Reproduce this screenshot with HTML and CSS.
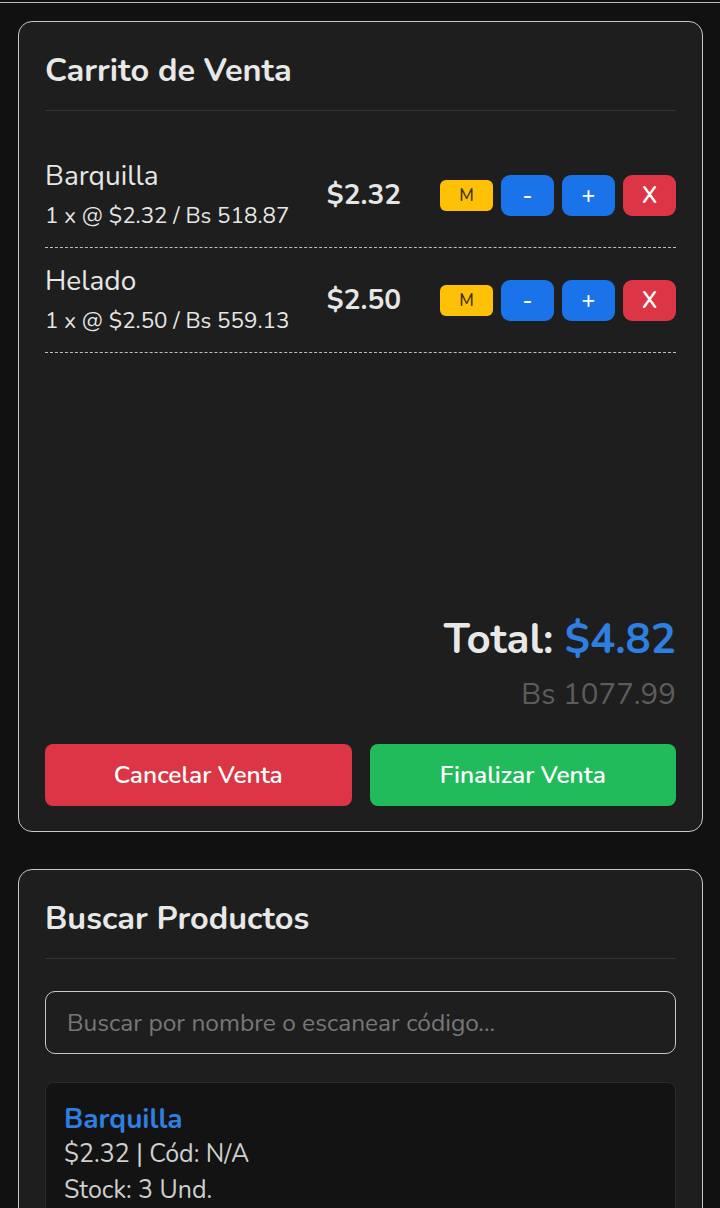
FILE: index.html
```html
<!DOCTYPE html>
<html lang="es">
<head>
    <meta charset="UTF-8">
    <meta name="viewport" content="width=device-width, initial-scale=1.0">
    <title>Punto de Venta</title>
    <link rel="stylesheet" href="styles.css">
</head>
<body>

    <div class="barra-top"></div>

    <div class="contenedor">
        <section class="tarjeta">
            <h2>Carrito de Venta</h2>

            <div class="lista-carrito">
                <div class="item-carrito">
                    <div class="item-info">
                        <div class="item-nombre">Barquilla</div>
                        <div class="item-detalle">1 x @ $2.32 / Bs 518.87</div>
                    </div>
                    <div class="item-precio">$2.32</div>
                    <div class="item-acciones">
                        <button class="btn-mini btn-m">M</button>
                        <button class="btn-mini btn-azul">-</button>
                        <button class="btn-mini btn-azul">+</button>
                        <button class="btn-mini btn-rojo">X</button>
                    </div>
                </div>
                <div class="item-carrito">
                    <div class="item-info">
                        <div class="item-nombre">Helado</div>
                        <div class="item-detalle">1 x @ $2.50 / Bs 559.13</div>
                    </div>
                    <div class="item-precio">$2.50</div>
                    <div class="item-acciones">
                        <button class="btn-mini btn-m">M</button>
                        <button class="btn-mini btn-azul">-</button>
                        <button class="btn-mini btn-azul">+</button>
                        <button class="btn-mini btn-rojo">X</button>
                    </div>
                </div>
            </div>

            <div class="total">Total: <span class="total-usd">$4.82</span></div>
            <div class="total-bs">Bs 1077.99</div>

            <div class="acciones-venta">
                <button class="btn-grande btn-cancelar">Cancelar Venta</button>
                <button class="btn-grande btn-finalizar">Finalizar Venta</button>
            </div>
        </section>

        <section class="tarjeta">
            <h2>Buscar Productos</h2>
            <input type="text" class="buscador" placeholder="Buscar por nombre o escanear código...">

            <div class="producto">
                <div class="producto-nombre">Barquilla</div>
                <div class="producto-linea">$2.32 | Cód: N/A</div>
                <div class="producto-linea">Stock: 3 Und.</div>
            </div>
        </section>
    </div>

</body>
</html>
```

FILE: styles.css
```css
* {
    margin: 0;
    padding: 0;
    box-sizing: border-box;
}

body {
    font-family: 'Nunito', 'Lato', sans-serif;
    background: #111111;
    color: #e6e6e6;
}

.barra-top {
    height: 3px;
    border-bottom: 1px solid #bdbdbd;
}

.contenedor {
    padding: 18px 17px 0 18px;
    display: flex;
    flex-direction: column;
    gap: 37px;
}

.tarjeta {
    background: #1e1e1e;
    border: 1px solid #c8c8c8;
    border-radius: 14px;
    padding: 28px 26px 25px;
}

h2 {
    font-size: 32.5px;
    line-height: 40px;
    font-weight: 700;
    color: #e8e8e8;
    padding-bottom: 20px;
    border-bottom: 1px solid #333333;
}

.lista-carrito {
    margin-top: 32px;
    min-height: 450px;
}

.item-carrito {
    display: flex;
    align-items: center;
    padding: 16px 0;
    border-bottom: 1px dashed #bdbdbd;
}

.item-info {
    flex: 1;
}

.item-nombre {
    font-size: 28px;
    line-height: 34px;
}

.item-detalle {
    font-size: 22.4px;
    line-height: 30px;
    margin-top: 8px;
}

.item-precio {
    font-size: 28px;
    font-weight: 700;
    margin-right: 39px;
}

.item-acciones {
    display: flex;
    align-items: center;
    gap: 8px;
}

.btn-mini {
    width: 53px;
    height: 41px;
    border: none;
    border-radius: 9px;
    color: white;
    font-family: inherit;
    font-size: 23px;
    font-weight: 600;
    cursor: pointer;
}

.btn-m {
    height: 31px;
    border-radius: 6px;
    background: #ffc107;
    color: #3a2e00;
    font-size: 17px;
    font-weight: 500;
}

.btn-azul {
    background: #1a73e8;
}

.btn-rojo {
    background: #dc3545;
}

.total {
    margin-top: 22px;
    text-align: right;
    font-size: 42px;
    line-height: 50px;
    font-weight: 700;
    color: #e8e8e8;
}

.total-usd {
    color: #2f7fe0;
}

.total-bs {
    margin-top: 11px;
    text-align: right;
    font-size: 29.5px;
    line-height: 36px;
    color: #5c5c5c;
}

.acciones-venta {
    margin-top: 32px;
    display: flex;
    gap: 18px;
}

.btn-grande {
    flex: 1;
    height: 62px;
    border: none;
    border-radius: 8px;
    color: white;
    font-family: inherit;
    font-size: 24.5px;
    font-weight: 600;
    cursor: pointer;
}

.btn-cancelar {
    background: #dc3545;
}

.btn-finalizar {
    background: #22bb5b;
}

.buscador {
    display: block;
    width: 100%;
    height: 63px;
    margin-top: 32px;
    padding: 0 21px;
    background: #1e1e1e;
    border: 1px solid #c8c8c8;
    border-radius: 10px;
    color: #e6e6e6;
    font-family: inherit;
    font-size: 24.5px;
    outline: none;
}

.buscador::placeholder {
    color: #777777;
}

.producto {
    margin-top: 28px;
    background: #131313;
    border: 1px solid #2a2a2a;
    border-radius: 8px;
    padding: 19px 18px 17px;
}

.producto-nombre {
    font-size: 28px;
    line-height: 35px;
    font-weight: 700;
    color: #2f7fe0;
}

.producto-linea {
    font-size: 25px;
    line-height: 35.5px;
    color: #cfcfcf;
}
```
